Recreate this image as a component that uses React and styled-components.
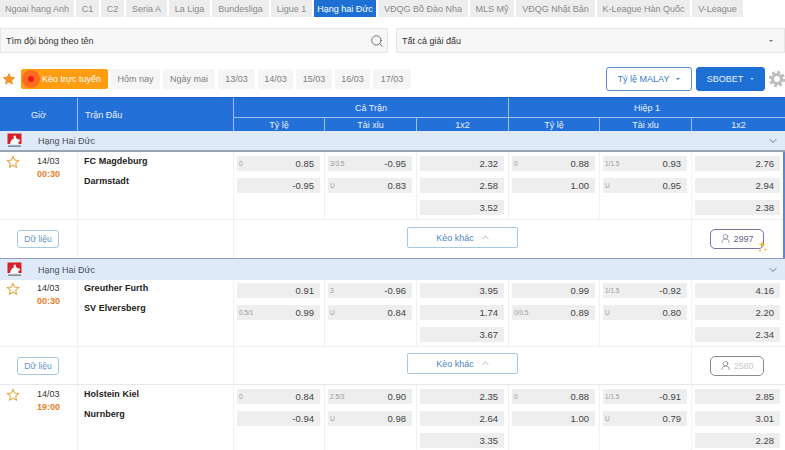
import React from 'react';
import styled, { createGlobalStyle } from 'styled-components';
import { Search, ChevronDown, ChevronUp, UserRound } from 'lucide-react';

const Global = createGlobalStyle`
  html, body { margin: 0; padding: 0; background: #fff; }
  body { font-family: "Liberation Sans", Arial, sans-serif; overflow: hidden; }
  * { box-sizing: border-box; }
`;
const COLS = '77px 156px 91px 92px 92px 91px 92px 94px';

const Page = styled.div`width: 785px; height: 450px; overflow: hidden;`;
const Tabs = styled.nav`display: flex; height: 17px; gap: 2px;`;
const Tab = styled.div`
  width: ${p => p.$w}px; flex: none; display: flex; align-items: center; justify-content: center;
  font-size: 9px; white-space: nowrap;
  background: ${p => (p.$active ? '#1e6fd4' : '#ededed')};
  color: ${p => (p.$active ? '#fff' : '#8a8a8a')};
`;
const SearchRow = styled.div`display: flex; justify-content: space-between; margin-top: 11px; height: 25px;`;
const Field = styled.div`
  width: ${p => p.$w}px; display: flex; align-items: center; justify-content: space-between;
  background: #f7f7f7; border: 1px solid #e6e6e6; padding: 0 3px 0 5px;
  font-size: 9px; color: #333;
`;
const SmallCaret = styled.span`
  width: 0; height: 0; border: 2px solid transparent; border-top: 2px solid ${p => p.$c || '#777'}; border-bottom: 0;
  margin-right: ${p => p.$mr || 0}px;
`;
const FilterRow = styled.div`display: flex; align-items: center; margin-top: 14px; height: 24px;`;
const BigStar = styled.svg`width: 16px; height: 16px; margin-left: 1px; margin-right: 4px; flex: none;`;
const Chips = styled.div`display: flex; gap: 3px; align-items: center;`;
const LiveChip = styled.div`
  position: relative; width: 87px; height: 20px; border-radius: 2px; background: #ff9d12; color: #fff;
  font-size: 9px; display: flex; align-items: center; padding-left: 21px; white-space: nowrap;
`;
const Halo = styled.span`
  position: absolute; left: 1px; top: 1px; width: 18px; height: 18px; border-radius: 50%; background: #ff6b1c;
  &::after { content: ''; position: absolute; left: 6px; top: 6px; width: 6px; height: 6px; border-radius: 50%; background: #ee1a1a; }
`;
const Chip = styled.div`
  width: ${p => p.$w}px; height: 20px; background: #f5f5f5; color: #7d7d7d; font-size: 9px;
  display: flex; align-items: center; justify-content: center; border-radius: 2px; white-space: nowrap;
`;
const Right = styled.div`margin-left: auto; display: flex; align-items: center; gap: 4px;`;
const Select = styled.div`
  width: ${p => p.$w}px; height: 24px; border-radius: 3px; font-size: 9px; display: flex; align-items: center;
  justify-content: center; gap: 7px; border: 1px solid ${p => (p.$solid ? '#1e6fd4' : '#5a8ec8')};
  background: ${p => (p.$solid ? '#1e6fd4' : '#fff')}; color: ${p => (p.$solid ? '#e8f1fb' : '#3b7cc9')};
`;
const Gear = styled.svg`width: 18px; height: 18px; flex: none; margin-left: -1px; margin-right: -1px;`;

const Head = styled.div`
  margin-top: 6px; display: grid; grid-template-columns: ${COLS}; grid-template-rows: 19px 14px;
  background: #2270d8; color: #eaf2fc; font-size: 9px; border-top: 1px solid #1a62c4;
`;
const HeadCell = styled.div`
  grid-column: span ${p => p.$span || 1}; grid-row: span ${p => p.$rows || 1};
  display: flex; align-items: center; justify-content: ${p => (p.$left ? 'flex-start' : 'center')};
  padding-left: ${p => (p.$left ? 7 : 0)}px; white-space: nowrap;
  border-left: ${p => (p.$first ? 0 : 1)}px solid #9cc2f0;
  border-top: ${p => (p.$sub ? 1 : 0)}px solid #9cc2f0;
`;
const League = styled.div`
  height: ${p => p.$h}px; display: flex; align-items: center; background: #dfeaf8; color: #4a4f57; font-size: 9px;
  padding: 0 6px 0 7px; border-bottom: ${p => (p.$line ? 2 : 0)}px solid #9aa3b2;
  border-top: ${p => (p.$top ? 1 : 0)}px solid #8f9cc4;
`;
const LeagueName = styled.span`margin-left: 16px; flex: 1;`;
const MatchBox = styled.div`border-right: ${p => (p.$sel ? 2 : 0)}px solid #5c86d6;`;
const MatchGrid = styled.div`
  display: grid; grid-template-columns: ${COLS}; height: ${p => p.$h}px; border-bottom: 1px solid #edf0f4;
`;
const Col = styled.div`border-left: ${p => (p.$first ? 0 : 1)}px solid #eef1f5;`;
const TimeCol = styled(Col)`display: flex; padding: ${p => p.$top - 1}px 0 0 6px;`;
const Star = styled.svg`width: 14px; height: 14px; flex: none;`;
const When = styled.div`margin-left: 17px; font-size: 9px; line-height: 13px; color: #333;`;
const Hour = styled.div`color: #e8801f; font-weight: bold; font-size: 9px;`;
const Teams = styled(Col)`
  padding: ${p => p.$top - 1}px 0 0 6px; font-size: 9px; font-weight: bold; color: #222; letter-spacing: .05px;
  display: flex; flex-direction: column; gap: 6.5px; line-height: 13px;
`;
const OddsCol = styled(Col)`
  display: flex; flex-direction: column; gap: 7px; padding: ${p => p.$top}px 4px 0 3px;
  &:last-child { padding-right: 5px; }
`;
const Odd = styled.div`
  height: 15px; background: #eeeeee; display: flex; align-items: center; justify-content: space-between;
  padding: 0 6px 0 2px; font-size: 9.5px; color: #444; flex: none;
`;
const Line = styled.span`font-size: 6.5px; color: #999;`;
const Foot = styled.div`display: grid; grid-template-columns: 77px 156px 458px 94px; height: ${p => p.$h}px; border-bottom: ${p => (p.$line ? 1 : 0)}px solid #e4e9f0;`;
const FootCol = styled.div`
  display: flex; align-items: center; justify-content: center; padding-bottom: ${p => p.$pb || 0}px;
  border-left: ${p => (p.$first ? 0 : 1)}px solid #eef1f5;
`;
const DataBtn = styled.div`
  width: 42px; height: 18px; border: 1px solid #a6c8e4; border-radius: 3px; color: #5f92c9; font-size: 8.5px;
  display: flex; align-items: center; justify-content: center; margin-right: 1px;
`;
const MoreBtn = styled.div`
  width: 111px; height: 21px; border: 1px solid #a6c8e4; border-radius: 2px; color: #4c85c9; font-size: 9px;
  display: flex; align-items: center; justify-content: center; gap: 6px; padding-left: 2px;
`;
const ViewerBtn = styled.div`
  position: relative; width: 54px; height: 20px; border-radius: 5px; font-size: 9px; margin-right: 3px;
  border: 1px solid ${p => (p.$off ? '#8c8c8c' : '#77779f')}; color: ${p => (p.$off ? '#c9c9c9' : '#66668a')};
  display: flex; align-items: center; justify-content: center; gap: 2px;
`;
const Spark = styled.svg`position: absolute; right: -6px; bottom: -6px; width: 12px; height: 13px;`;

const tabs = [['Ngoai hang Anh', 74], ['C1', 23], ['C2', 23], ['Seria A', 41], ['La Liga', 41], ['Bundesliga', 57], ['Ligue 1', 41], ['Hạng hai Đức', 62, true], ['VĐQG Bồ Đào Nha', 90], ['MLS Mỹ', 44], ['VĐQG Nhật Bản', 79], ['K-League Hàn Quốc', 93], ['V-League', 51]];
const chips = [['Hôm nay', 49], ['Ngày mai', 52], ['13/03', 37], ['14/03', 35], ['15/03', 36], ['16/03', 35], ['17/03', 38]];
const STAR = 'M12 2.5l2.9 6.2 6.8.8-5 4.6 1.3 6.7-6-3.4-6 3.4 1.3-6.7-5-4.6 6.8-.8z';

const matches = [
  { date: '14/03', time: '00:30', home: 'FC Magdeburg', away: 'Darmstadt', top: 4, h: 68, sel: true, foot: 38, pb: 3, vpb: 1, viewers: '2997',
    odds: [[['0', '0.85'], ['', '-0.95']], [['3/3.5', '-0.95'], ['U', '0.83']], [['', '2.32'], ['', '2.58'], ['', '3.52']], [['0', '0.88'], ['', '1.00']], [['1/1.5', '0.93'], ['U', '0.95']], [['', '2.76'], ['', '2.94'], ['', '2.38']]] },
  { date: '14/03', time: '00:30', home: 'Greuther Furth', away: 'SV Elversberg', top: 3, h: 67, foot: 38, pb: 4, off: true, viewers: '2580',
    odds: [[['', '0.91'], ['0.5/1', '0.99']], [['3', '-0.96'], ['U', '0.84']], [['', '3.95'], ['', '1.74'], ['', '3.67']], [['', '0.99'], ['0/0.5', '0.89']], [['1/1.5', '-0.92'], ['U', '0.80']], [['', '4.16'], ['', '2.20'], ['', '2.34']]] },
  { date: '14/03', time: '19:00', home: 'Holstein Kiel', away: 'Nurnberg', top: 4, h: 68,
    odds: [[['0', '0.84'], ['', '-0.94']], [['2.5/3', '0.90'], ['U', '0.98']], [['', '2.35'], ['', '2.64'], ['', '3.35']], [['0', '0.88'], ['', '1.00']], [['1/1.5', '-0.91'], ['U', '0.79']], [['', '2.85'], ['', '3.01'], ['', '2.28']]] },
];

const Logo = () => (
  <svg width="15" height="15" viewBox="0 0 15 15" style={{ flex: 'none' }}>
    <rect x="0.5" y="0.5" width="14" height="10.500" fill="#d3232a" />
    <path d="M3 11 C4 7 5 6 7 5.500 L6.500 3 L8.500 2.500 L9 5 C11 5.500 11.500 8 11.500 11 Z" fill="#fff" />
    <circle cx="11.800" cy="7.500" r="1.200" fill="#f2f2f2" />
    <rect x="1" y="12.500" width="13" height="1.300" fill="#777" />
  </svg>
);

const LeagueBar = ({ h, line, top }) => (
  <League $h={h} $line={line} $top={top}>
    <Logo />
    <LeagueName>Hạng Hai Đức</LeagueName>
    <ChevronDown size={12} color="#4b5563" strokeWidth={1.6} />
  </League>
);

const Match = ({ m }) => (
  <MatchBox $sel={m.sel}>
    <MatchGrid $h={m.h}>
      <TimeCol $first $top={m.top}>
        <Star viewBox="0 0 24 24" fill="none" stroke="#e3a33c" strokeWidth="1.800"><path d={STAR} /></Star>
        <When>
          <div>{m.date}</div>
          <Hour>{m.time}</Hour>
        </When>
      </TimeCol>
      <Teams $top={m.top}>
        <div>{m.home}</div>
        <div>{m.away}</div>
      </Teams>
      {m.odds.map((col, i) => (
        <OddsCol key={i} $top={m.top}>
          {col.map(([l, v], j) => (
            <Odd key={j}><Line>{l}</Line><span>{v}</span></Odd>
          ))}
        </OddsCol>
      ))}
    </MatchGrid>
    {m.foot && (
      <Foot $h={m.foot} $line={!m.sel}>
        <FootCol $first><DataBtn>Dữ liệu</DataBtn></FootCol>
        <FootCol />
        <FootCol $pb={m.pb}>
          <MoreBtn>Kèo khác <ChevronUp size={11} color="#7d9cc4" strokeWidth={1.5} /></MoreBtn>
        </FootCol>
        <FootCol $pb={m.vpb}>
          <ViewerBtn $off={m.off}>
            <UserRound size={11} color={m.off ? '#777' : '#77779f'} strokeWidth={1.5} />
            {m.viewers}
            {!m.off && (
              <Spark viewBox="0 0 12 13" fill="#e9b52c">
                <path d="M5 0l1 2.800 2.600.7-2.600.8L5 7 4 4.300 1.400 3.500 4 2.800z" />
                <circle cx="3" cy="9.500" r="1.100" />
                <circle cx="8.500" cy="8.500" r="1.100" />
                <circle cx="6" cy="11.500" r=".6" fill="#d8d8d8" />
              </Spark>
            )}
          </ViewerBtn>
        </FootCol>
      </Foot>
    )}
  </MatchBox>
);

export default function App() {
  return (
    <Page>
      <Global />
      <Tabs>
        {tabs.map(([t, w, a]) => <Tab key={t} $w={w} $active={a}>{t}</Tab>)}
      </Tabs>
      <SearchRow>
        <Field $w={388}>Tìm đội bóng theo tên <Search size={14} color="#555" strokeWidth={1.4} /></Field>
        <Field $w={389}>Tất cả giải đấu <SmallCaret $mr={8} /></Field>
      </SearchRow>
      <FilterRow>
        <BigStar viewBox="0 0 24 24" fill="#f0952a"><path d={STAR} /></BigStar>
        <Chips>
          <LiveChip><Halo />Kèo trực tuyến</LiveChip>
          {chips.map(([t, w]) => <Chip key={t} $w={w}>{t}</Chip>)}
        </Chips>
        <Right>
          <Select $w={86}>Tỷ lệ MALAY <SmallCaret $c="#3b7cc9" /></Select>
          <Select $w={69} $solid>SBOBET <SmallCaret $c="#a9c8ee" /></Select>
          <Gear viewBox="0 0 20 20" fill="none" stroke="#bdbdbd">
            <circle cx="10" cy="10" r="5" strokeWidth="3.600" />
            <circle cx="10" cy="10" r="7.600" strokeWidth="3" strokeDasharray="3.200 2.770" />
          </Gear>
        </Right>
      </FilterRow>
      <Head>
        <HeadCell $rows={2} $first>Giờ</HeadCell>
        <HeadCell $rows={2} $left>Trận Đấu</HeadCell>
        <HeadCell $span={3}>Cả Trận</HeadCell>
        <HeadCell $span={3}>Hiệp 1</HeadCell>
        {['Tỷ lệ', 'Tài xỉu', '1x2', 'Tỷ lệ', 'Tài xỉu', '1x2'].map((t, i) => <HeadCell key={i} $sub>{t}</HeadCell>)}
      </Head>
      <LeagueBar h={21} line />
      <Match m={matches[0]} />
      <LeagueBar h={22} top />
      <Match m={matches[1]} />
      <Match m={matches[2]} />
    </Page>
  );
}
